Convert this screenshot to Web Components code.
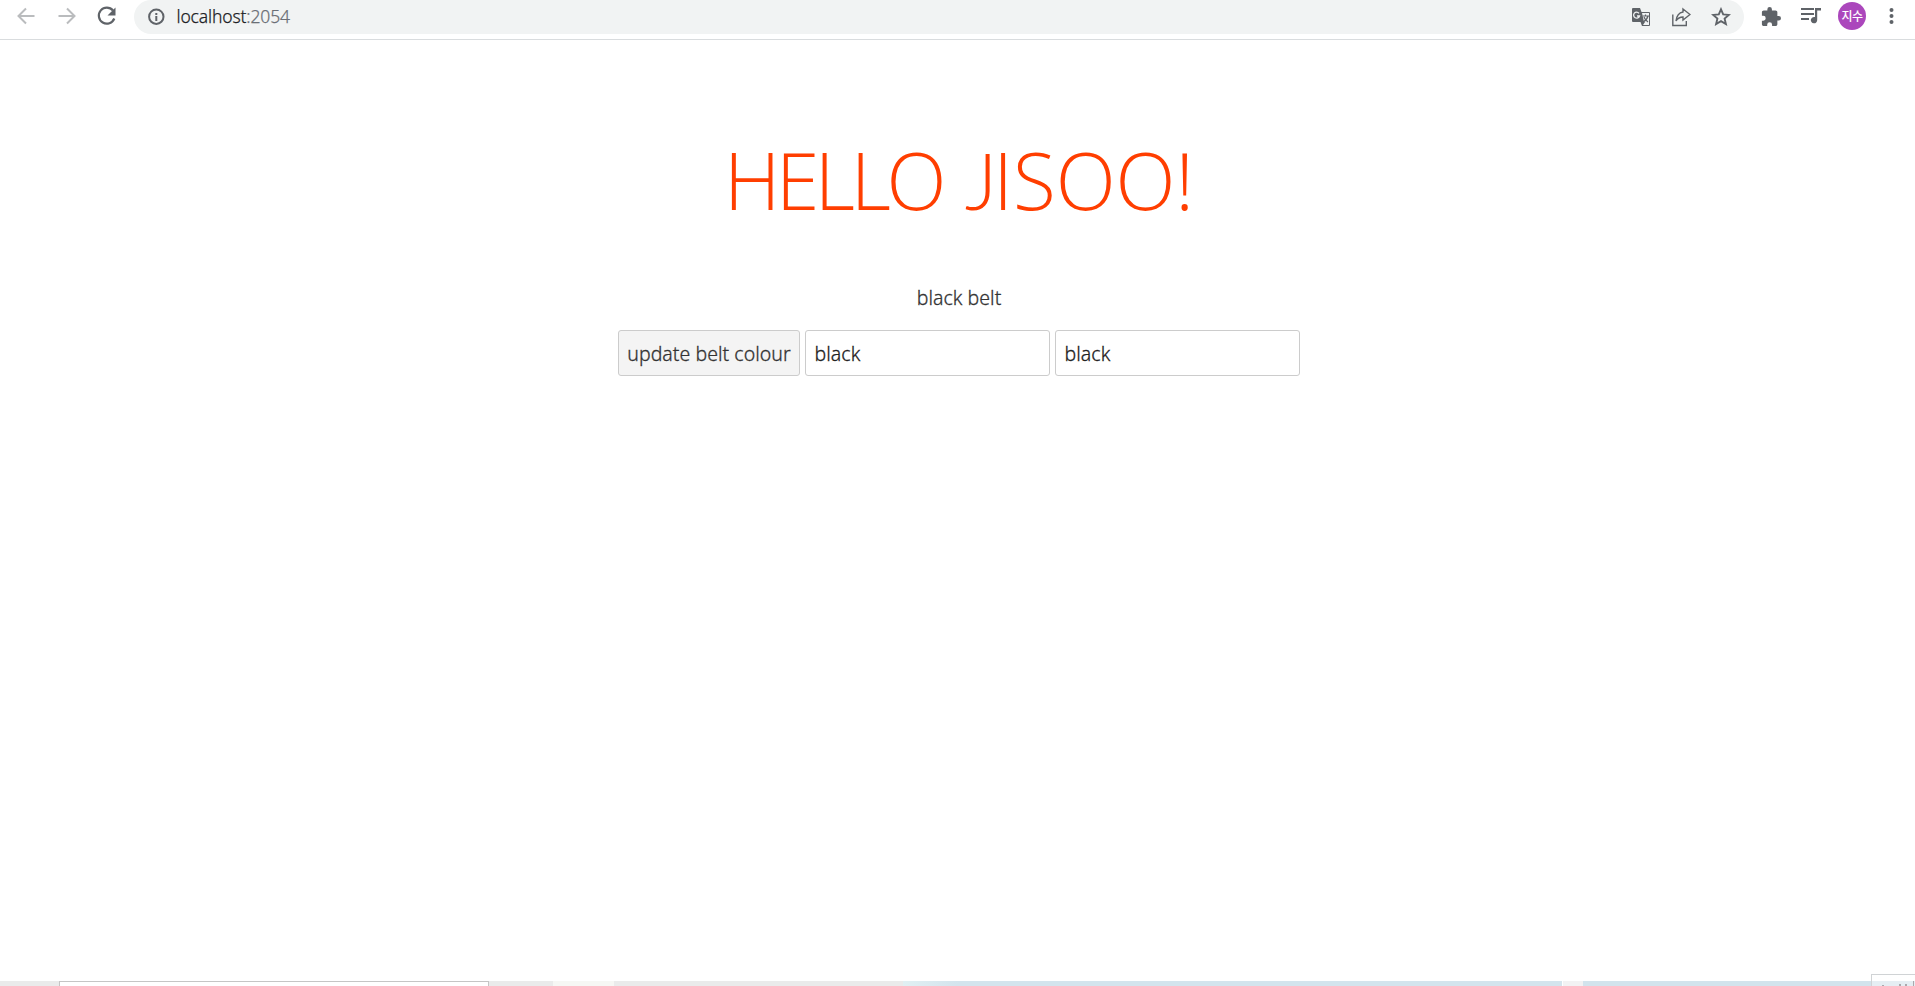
<!DOCTYPE html>
<html lang="en"><head><meta charset="utf-8"><title>Hello Jisoo</title>
<style>html,body{margin:0;height:100%;overflow:hidden;background:#fff}body{font-family:"Noto Sans","Open Sans",sans-serif}</style></head>
<body><app-window></app-window>
<script>
const define=(name,html)=>customElements.define(name,class extends HTMLElement{
 constructor(){super();const t=document.createElement('template');t.innerHTML=html;this.attachShadow({mode:'open'}).append(t.content.cloneNode(true));}
});
define('nav-buttons',`<style>:host{display:flex;align-items:center;gap:16px;padding-left:14px;width:120px;box-sizing:border-box;height:32px}svg{width:24px;height:24px;flex:none}</style>
<svg viewBox="0 0 24 24" fill="none" stroke="#babcbe" stroke-width="2"><path d="M20.500 12H5M12 4.500 4.500 12l7.500 7.500"/></svg>
<svg viewBox="0 0 24 24" fill="none" stroke="#babcbe" stroke-width="2"><path d="M4.500 12H20M13 4.500 20.500 12 13 19.500"/></svg>
<svg viewBox="0 0 24 24" fill="none" stroke="#5f6368" stroke-width="2.200"><path d="M19 6.500A8 8 0 1 0 20.300 14.500"/><path d="M21.500 3.500v8h-8z" fill="#5f6368" stroke="none"/></svg>`);
define('address-bar',`<style>:host{display:flex;align-items:center;box-sizing:border-box;width:1610px;height:34px;padding:0 13px;background:#f1f3f3;border-radius:17px}
svg{flex:none}.info{width:18px;height:18px}.url{margin:-2px 0 0 11.500px;flex:1;font:300 17.500px/24px "Noto Sans",sans-serif;letter-spacing:-.14px;-webkit-text-stroke:.25px;color:#202124;white-space:nowrap}.port{color:#6b6f76}.tools{display:flex;gap:20px;align-items:center}.tools svg{width:20px;height:20px}</style>
<svg class="info" viewBox="0 0 18 18" fill="none" stroke="#5f6368" stroke-width="2"><circle cx="9.300" cy="8.700" r="7.200"/><path d="M9.300 8v5M9.300 5v2"/></svg>
<div class="url">localhost<span class="port">:2054</span></div>
<div class="tools"><svg viewBox="0 0 20 20"><path d="M2 1h7l1.500 4H18q1 0 1 1v12q0 1-1 1h-7l-1.500-4H2q-1 0-1-1V2q0-1 1-1z" fill="#5f6368"/><path d="M11 6h7v12h-6l2-3h-1z" fill="#f1f3f4"/><path d="M8 6.300A3 3 0 1 0 8.500 9H6" fill="none" stroke="#f1f3f4" stroke-width="1.300"/><path d="M11.500 9H18M14.500 7.500V9M17 9q-1 4-5 6M13 10q1 3 4 5" fill="none" stroke="#5f6368" stroke-width="1.200"/></svg>
<svg viewBox="0 0 20 20" fill="none" stroke="#5f6368" stroke-width="1.400"><path d="M1.800 7.500v11h13.500V14M12 2l7 5.500L12 13v-3Q7.500 10 5 14 6 6 12 5z"/></svg>
<svg viewBox="0 0 20 20" fill="none" stroke="#5f6368" stroke-width="1.900"><path d="m10 2.300 2.200 5.100 5.600.5-4.200 3.700 1.300 5.500-4.900-2.900-4.900 2.900 1.300-5.500L2.200 7.900l5.600-.5z"/></svg></div>`);
define('profile-tools',`<style>:host{display:flex;align-items:center;height:32px;margin-bottom:2px}svg{width:20px;height:20px;flex:none}.ext{margin-left:17px}.media{margin-left:20px}.avatar{margin-left:17px;width:28px;height:28px;border-radius:50%;background:#ab47bc;color:#fff;font:500 12px/27px "Noto Sans CJK KR",sans-serif;text-align:center;letter-spacing:-.5px}.menu{margin-left:16px}</style>
<svg class="ext" viewBox="1 0 22 22"><path fill="#5f6368" d="M20.500 11H19V7c0-1.100-.9-2-2-2h-4V3.500a2.500 2.500 0 0 0-5 0V5H4c-1.100 0-2 .9-2 2v3.800h1.500a2.700 2.700 0 0 1 0 5.400H2V20c0 1.100.9 2 2 2h3.800v-1.500a2.700 2.700 0 0 1 5.400 0V22H17c1.100 0 2-.9 2-2v-4h1.500a2.500 2.500 0 0 0 0-5z"/></svg>
<svg class="media" viewBox="0 0 20 20"><path d="M0 3h13M0 8h13M0 13h8" stroke="#5f6368" stroke-width="2"/><path d="M14 2h6v2.500h-3.800V14a3.200 3.200 0 1 1-2.200-2.900z" fill="#5f6368"/></svg>
<div class="avatar">지수</div><svg class="menu" viewBox="0 0 20 20" fill="#5f6368"><circle cx="9.500" cy="4" r="2"/><circle cx="9.500" cy="10" r="2"/><circle cx="9.500" cy="16" r="2"/></svg>`);
define('browser-toolbar',`<style>:host{display:flex;box-sizing:border-box;height:40px;border-bottom:1px solid #d9dcde;background:#fff;overflow:hidden}address-bar{margin:0 0 0 14px}.wrap{display:flex;height:34px;align-items:center}</style><nav-buttons></nav-buttons><div class="wrap"><address-bar></address-bar><profile-tools></profile-tools></div>`);
define('belt-button',`<style>:host{display:block}button{display:block;box-sizing:border-box;width:182px;height:46px;padding:0;border:1px solid #ccc;border-radius:3px;background:#f4f4f4;color:#333;font:300 19.500px/46px "Noto Sans",sans-serif;letter-spacing:.04px;-webkit-text-stroke:.3px;white-space:nowrap}</style><button><slot></slot></button>`);
define('belt-field',`<style>:host{display:flex;align-items:center;box-sizing:border-box;width:245px;height:46px;border:1px solid #ccc;border-radius:3px;padding:1px 8px 0 8.500px;background:#fff;color:#222;font:300 19.500px/44px "Noto Sans",sans-serif;letter-spacing:.05px;-webkit-text-stroke:.3px}</style><slot></slot>`);
define('hello-page',`<style>:host{display:flex;flex-direction:column;align-items:center;flex:1;padding-left:3px;color:#333}h1{display:flex;justify-content:space-between;width:470px;margin:84px 0 0;font:200 78.400px/112px "Open Sans","Noto Sans",sans-serif;color:#ff3e00;white-space:nowrap}.first{letter-spacing:-4.400px}.second{letter-spacing:-.1px}.j{font-family:Lato,sans-serif;font-weight:300;letter-spacing:-4px}p{margin:48px 0 0;font:300 19.500px/28px "Noto Sans",sans-serif;letter-spacing:.04px;-webkit-text-stroke:.3px}.row{display:flex;gap:5px;margin-top:18px}</style>
<h1><span class="first">HELLO</span> <span class="second"><span class="j">J</span>ISOO!</span></h1><p>black belt</p><div class="row"><belt-button>update belt colour</belt-button><belt-field>black</belt-field><belt-field>black</belt-field></div>`);
define('desktop-edge',`<style>:host{display:grid;grid-template-columns:59px 430px 64px 61px 289px 659px 1px 20px 1fr;height:5px;background:#eaebeb}.field{background:#fff;border:1px solid #c5c5c5;border-bottom:0}.tab{background:#f6f7f4}.blue{background:linear-gradient(90deg,#e1f0f3,#d3e4ed 55px,#d3e4ed)}.blue2{background:#d2e3ec}.gap{background:#fff}.light{background:#f2f2f3}
.tip{position:absolute;right:0;bottom:0;width:44px;height:12px;box-sizing:border-box;border:1px solid #d0d3d5;border-right:0;border-bottom:0;background:linear-gradient(#fff 6px,#e5eef3 6px)}.tip svg{display:block;width:43px;height:11px}</style>
<i></i><i class="field"></i><i></i><i class="tab"></i><i></i><i class="blue"></i><i class="gap"></i><i class="light"></i><i class="blue2"></i><div class="tip"><svg viewBox="0 0 43 11" fill="#aaa9ad"><path d="M10 10h2v1h-2zM27 9h2v2h-2zM33 9h2v2h-2zM41 6h1v5h-1z"/></svg></div>`);
define('app-window',`<style>:host{display:flex;position:relative;flex-direction:column;width:1915px;height:986px;overflow:hidden}</style><browser-toolbar></browser-toolbar><hello-page></hello-page><desktop-edge></desktop-edge>`);
</script></body></html>
